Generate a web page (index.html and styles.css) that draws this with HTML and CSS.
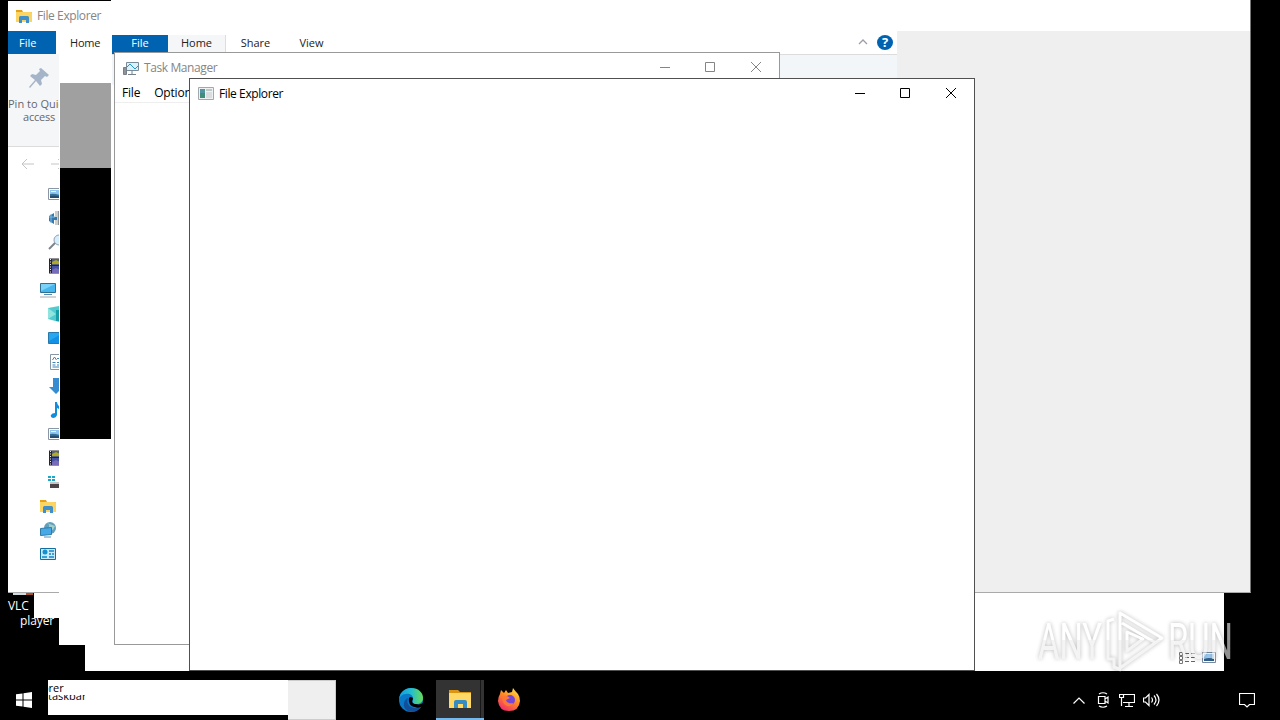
FILE: index.html
```html
<!DOCTYPE html>
<html lang="en">
<head>
    <meta charset="UTF-8">
    <meta name="viewport" content="width=device-width, initial-scale=1.0">
    <title>Desktop</title>
    <link rel="stylesheet" href="styles.css">
</head>
<body>
    <!-- Shared icons -->
    <svg class="icon-defs" aria-hidden="true">
        <symbol id="folder" viewBox="0 0 16 16">
            <path d="M0 2h6l1 2h9v4H0z" fill="#e6a117"/>
            <path d="M0 4h15q1 0 1 1v9H0z" fill="#fcd462"/>
            <path d="M3 15V9.500q0-1.500 1.500-1.500h7q1.500 0 1.500 1.500V15h-3v-3H6v3z" fill="#3f8fcb"/>
        </symbol>
        <symbol id="picture" viewBox="0 0 16 16">
            <path d="M.5 2.500h15v11H.5z" fill="#fff" stroke="#8a96a5"/>
            <path d="M2 4h12v8H2z" fill="#8fc6ef"/>
            <path d="M2 8q5-1 12 2v2H2z" fill="#376f94"/>
            <path d="M2 10q6-1 12 1v1H2z" fill="#264d70"/>
            <path d="M3 5h5v1H3z" fill="#e8f5ff"/>
        </symbol>
        <symbol id="film" viewBox="0 0 16 16">
            <path d="M1 .5h14v15H1z" fill="#272330"/>
            <path d="M4 1h8v6H4z" fill="#536172"/>
            <path d="M4 4l4-2 4 2v2H4z" fill="#b2a72d"/>
            <path d="M4 8h8v7H4z" fill="#4552a6"/>
            <path d="M4 12l4-2 4 2v3H4z" fill="#776db7"/>
            <path d="M2.500 1v14M13.500 1v14" stroke="#eee" stroke-dasharray="1 1.500"/>
        </symbol>
        <symbol id="minimize" viewBox="0 0 10 10"><path d="M0 5.500h10"/></symbol>
        <symbol id="maximize" viewBox="0 0 10 10"><path d="M.5.500h9v9h-9z"/></symbol>
        <symbol id="close" viewBox="0 0 10 10"><path d="M0 0l10 10M10 0L0 10"/></symbol>
    </svg>

    <div class="desktop">
        <div class="desktop-label">
            <svg width="20" height="3" viewBox="0 0 20 3"><path d="M0 0h13v2H0z" fill="#cfdde0"/><path d="M13 0h7v2h-7z" fill="#a8512c"/></svg>
            <span>VLC</span>
            <span class="label-second">player</span>
        </div>

        <!-- Trails left by a dragged window -->
        <div class="trail trail-one"></div>
        <div class="trail trail-two"></div>
        <div class="trail trail-three">
            <svg class="view-icons" width="38" height="14" viewBox="0 0 38 14" fill="none">
                <path d="M.5 1.500h3v3h-3zM.5 5.500h3v3h-3zM.5 9.500h3v3h-3z" stroke="#777"/>
                <path d="M6 2.500h4M12 2.500h4M6 6.500h4M12 6.500h4M6 10.500h4M12 10.500h4" stroke="#666"/>
                <path d="M23.500 1.500h13v10h-13z" fill="#fff" stroke="#78899f"/>
                <path d="M25 3h10v7H25z" fill="#9ecbf2"/>
                <path d="M25 8q5-2 10 0v2H25z" fill="#315f88"/>
            </svg>
        </div>

        <div class="window explorer-back">
            <div class="explorer-title">
                <svg width="16" height="16"><use href="#folder"/></svg>
                <span>File Explorer</span>
            </div>
            <div class="explorer-body">
                <div class="side">
                    <div class="file-tab">File</div>
                    <div class="pin">
                        <svg width="22" height="22" viewBox="0 0 22 22">
                            <path d="M13 1l8 7-2 2-2-1-4 4 1 4-2 2-4-5-6 7-1-1 6-7-5-4 2-2 4 1 4-4-1-2z" fill="#a5b4c9"/>
                        </svg>
                        <span class="pin-text">Pin to Quick</span>
                        <span>access</span>
                    </div>
                    <div class="nav-arrows">
                        <svg width="48" height="12" viewBox="0 0 48 12" fill="none" stroke="#c4c4c4">
                            <path d="M6 1L1 6l5 5M1 6h12M30 6h12M37 1l5 5-5 5"/>
                        </svg>
                    </div>
                    <div class="tree">
                        <div class="tree-row child"><svg><use href="#picture"/></svg></div>
                        <div class="tree-row child">
                            <svg viewBox="0 0 16 16"><path d="M7 1h9v14H7z" fill="#899398"/><path d="M7 1h3v14H7z" fill="#c9cecb"/><path d="M1 6l5-3v4h3v3H6v4L1 11z" fill="#3478ab"/><path d="M1 7h6M3 4v9" stroke="#80b6dc"/></svg>
                        </div>
                        <div class="tree-row child">
                            <svg viewBox="0 0 16 16"><circle cx="11" cy="6" r="5" fill="#d6edfc" stroke="#8ba4b6"/><path d="M7 9l-6 6" stroke="#7d858c" stroke-width="2"/></svg>
                        </div>
                        <div class="tree-row child"><svg><use href="#film"/></svg></div>
                        <div class="tree-row">
                            <svg viewBox="0 0 16 16"><path d="M.5 1.500h15v9H.5z" fill="#47b6ed" stroke="#317090"/><path d="M1 2h14L1 9z" fill="#7bd1f8"/><path d="M4 12.500h8" stroke="#538cad"/><path d="M0 15h16" stroke="#a8a9b0"/></svg>
                        </div>
                        <div class="tree-row child">
                            <svg viewBox="0 0 16 16"><path d="M0 2l11-2v16L0 13z" fill="#52cbd0"/><path d="M0 2l8 6-8 5z" fill="#91e4de"/><path d="M8 4h8v11H8z" fill="#159da8"/></svg>
                        </div>
                        <div class="tree-row child">
                            <svg viewBox="0 0 16 16"><path d="M.5 2.500h15v11H.5z" fill="#1491e5" stroke="#2878a9"/><path d="M1 3h14L1 11z" fill="#26a7ef"/></svg>
                        </div>
                        <div class="tree-row child">
                            <svg viewBox="0 0 16 16"><path d="M2.500.5h11v15h-11z" fill="#fff" stroke="#8796a4"/><path d="M4.500 6l2-3 2 3M9 4.500h3M4.500 8.500h3M9 8.500h3M4.500 11h3M9 11h3M4.500 13h7" fill="none" stroke="#3a84bd"/></svg>
                        </div>
                        <div class="tree-row child">
                            <svg viewBox="0 0 16 16"><path d="M5 0h6v8h5l-8 8-7-7h4z" fill="#378bd0"/></svg>
                        </div>
                        <div class="tree-row child">
                            <svg viewBox="0 0 16 16"><path d="M7 0h2q0 3 3 5 2 3 0 5 0-3-3-4v7q-1 3-4 3-3-1-2-3 1-2 4-2z" fill="#118bdb"/></svg>
                        </div>
                        <div class="tree-row child"><svg><use href="#picture"/></svg></div>
                        <div class="tree-row child"><svg><use href="#film"/></svg></div>
                        <div class="tree-row child">
                            <svg viewBox="0 0 16 16"><path d="M0 2h3v2H0zM4 2h3v2H4zM0 5h3v2H0zM4 5h3v2H4z" fill="#1ba7c9"/><path d="M2 8h14v3H2z" fill="#c5c6c8"/><path d="M2 10h14v4H2z" fill="#4c4448"/></svg>
                        </div>
                        <div class="tree-row"><svg><use href="#folder"/></svg></div>
                        <div class="tree-row">
                            <svg viewBox="0 0 16 16"><circle cx="10" cy="6" r="6" fill="#639fba"/><path d="M7 1q4 2 1 5l5 2 2-4" fill="#a2cfcc"/><path d="M.5 6.500l11-1v7l-11 1z" fill="#45aae7" stroke="#327ba5"/><path d="M4 15h7" stroke="#4e93bf"/></svg>
                        </div>
                        <div class="tree-row">
                            <svg viewBox="0 0 16 16"><path d="M.5 2.500h15v11H.5z" fill="#c6eafd" stroke="#156e9f"/><circle cx="5" cy="6" r="2.500" fill="#178fca"/><path d="M2 11h5" stroke="#38a3d3" stroke-width="2"/><path d="M9 5h5M9 8h2M12 8h2M9 11h5" stroke="#1c83bc" stroke-width="1.500"/></svg>
                        </div>
                    </div>
                </div>
            </div>
        </div>

        <!-- Leftover pieces of the ribbon and console windows -->
        <div class="strip">
            <div class="strip-home">Home</div>
            <div class="strip-gray"></div>
            <div class="strip-black"></div>
            <div class="strip-white"></div>
        </div>

        <div class="window ribbon-window">
            <div class="tabs">
                <span class="tab tab-file">File</span>
                <span class="tab tab-home">Home</span>
                <span class="tab">Share</span>
                <span class="tab">View</span>
                <div class="tab-help">
                    <svg width="10" height="6" viewBox="0 0 10 6" fill="none" stroke="#9d9da8" stroke-width="1.300"><path d="M1 5l4-4 4 4"/></svg>
                    <span class="help">?</span>
                </div>
            </div>
            <div class="ribbon"></div>
        </div>

        <div class="window task-manager">
            <div class="titlebar">
                <svg class="app-icon" width="16" height="16" viewBox="0 0 16 16" fill="none">
                    <path d="M3.500 2.500h12v8h-12z" fill="#d8f2fc" stroke="#788b97"/>
                    <path d="M4 7l3-3 5 5 3-3" stroke="#2a94c5"/>
                    <path d="M9 11v3M5 14.500h8" stroke="#778088"/>
                    <path d="M.5 7.500h3v7h-3z" fill="#8b949b" stroke="#778088"/>
                </svg>
                <span>Task Manager</span>
                <div class="controls">
                    <svg><use href="#minimize"/></svg>
                    <svg><use href="#maximize"/></svg>
                    <svg><use href="#close"/></svg>
                </div>
            </div>
            <div class="menu"><span>File</span><span>Options</span></div>
        </div>

        <div class="window explorer-front">
            <div class="titlebar">
                <svg class="app-icon" width="16" height="14" viewBox="0 0 16 14">
                    <path d="M.5.500h15v12H.5z" fill="#eff1f2" stroke="#a3a9aa"/>
                    <path d="M2 2h5v9H2z" fill="#438c7c"/>
                    <path d="M2 2h5v4H2z" fill="#5294a0"/>
                    <path d="M8 2h6v2H8z" fill="#c0c8c8"/>
                    <path d="M8 5h6v6H8z" fill="#dadddd"/>
                </svg>
                <span>File Explorer</span>
                <div class="controls">
                    <svg><use href="#minimize"/></svg>
                    <svg><use href="#maximize"/></svg>
                    <svg><use href="#close"/></svg>
                </div>
            </div>
        </div>

        <svg class="watermark" width="204" height="68" viewBox="0 0 204 68">
            <defs>
                <linearGradient id="mark" gradientUnits="userSpaceOnUse" x1="0" y1="0" x2="0" y2="68">
                    <stop offset=".5" stop-color="#fff"/>
                    <stop offset=".5" stop-color="#eee"/>
                </linearGradient>
            </defs>
            <g fill="url(#mark)" font-family="Roboto, sans-serif" font-size="50">
                <text x="4" y="53" textLength="64" lengthAdjust="spacingAndGlyphs">ANY</text>
                <text x="134" y="53" textLength="65" lengthAdjust="spacingAndGlyphs">RUN</text>
            </g>
            <g fill="none" stroke="url(#mark)" stroke-width="3" stroke-linejoin="round">
                <path d="M86 7l42 25-42 30zM88 17l34 20M80 13l-6 2v38h6v8l7 3"/>
                <path d="M93 26l16 7-16 12z"/>
            </g>
        </svg>

        <div class="taskbar">
            <div class="start">
                <svg width="16" height="16" viewBox="0 0 16 16" fill="#fff"><path d="M0 2.300l6.500-.9v6.100H0zM7.500 1.200L16 0v7.500H7.500zM0 8.500h6.500v6.100L0 13.700zM7.500 8.500H16V16l-8.500-1.200z"/></svg>
            </div>
            <div class="search-remains">
                <span class="remains-top">orer</span>
                <span class="remains-bottom">taskbar</span>
            </div>
            <div class="gray-button"></div>
            <div class="task edge">
                <svg width="24" height="24" viewBox="0 0 24 24">
                    <defs>
                        <linearGradient id="edgeTop" x1="0" x2="1"><stop stop-color="#159bdf"/><stop offset=".5" stop-color="#22bdd0"/><stop offset="1" stop-color="#6add52"/></linearGradient>
                    </defs>
                    <circle cx="12" cy="12" r="12" fill="#0878c7"/>
                    <path d="M0 11C1 4 6 0 12 0c8 0 12 5 12 10 0 4-3 6-7 6-3 0-4-2-3-4 1-4-3-7-7-6-3 0-6 2-7 5z" fill="url(#edgeTop)"/>
                    <path d="M9 10c-2 5 1 10 7 10 3 0 5-1 7-2-3 5-9 7-14 5C3 20 4 12 9 10z" fill="#124f99"/>
                    <path d="M10 10c1-2 4-1 4 1-2 3 0 5 3 5 3 1 5 0 7-1v3c-3 2-6 2-8 1-4 0-7-4-6-9z" fill="#000"/>
                </svg>
            </div>
            <div class="task active">
                <svg width="24" height="24" viewBox="0 0 24 24"><path d="M1 3h9l2 2h11v5H1z" fill="#dc9512"/><path d="M1 6h22v15H1z" fill="#ffd866"/><path d="M6 21v-6q0-2 2-2h9q2 0 2 2v6h-4v-4h-5v4z" fill="#348cc3"/></svg>
            </div>
            <div class="task firefox">
                <svg width="24" height="24" viewBox="0 0 24 24">
                    <defs>
                        <linearGradient id="fire" x1=".8" y1="0" x2=".2" y2="1"><stop stop-color="#ffe044"/><stop offset=".45" stop-color="#ff8a24"/><stop offset="1" stop-color="#f12670"/></linearGradient>
                    </defs>
                    <path d="M3 6l1-4 3 3 2-3 2 3 4-1 1-4q2 3 5 6 2 3 2 7-1 10-11 10T1 13q0-4 2-7z" fill="url(#fire)"/>
                    <circle cx="13" cy="12" r="5" fill="#7746d7"/>
                    <path d="M6 8q4-1 7 2l-4 2q1 4 7 3-1 4-6 3-6-3-4-10z" fill="#ff7831"/>
                </svg>
            </div>
            <div class="tray">
                <svg width="12" height="7" viewBox="0 0 12 7"><path d="M.5 6.500L6 1l5.500 5.500"/></svg>
                <svg width="12" height="16" viewBox="0 0 12 16"><path d="M1.500 4.500h6.500v7H1.500zM8 7l3-2v6L8 9M2 2q4-2.500 8 0M2 14q4 2.500 8 0"/></svg>
                <svg width="16" height="14" viewBox="0 0 16 14"><path d="M5 1.500h10.500v8H4M10 10v3M6 13.500h8M.5 1.500h4v3h-4zM2.500 5v8"/></svg>
                <svg width="17" height="14" viewBox="0 0 17 14"><path d="M.5 5h2L6 1.500v11L2.500 9h-2zM8.500 4.500q2 2.500 0 5M11 2.500q4 4.500 0 9M13.500 1q5 6 0 12"/></svg>
            </div>
            <svg class="notice" width="16" height="16" viewBox="0 0 16 16"><path d="M.5 1.500h15v11h-5L8 15l-2.500-2.500h-5z"/></svg>
        </div>
    </div>
</body>
</html>
```
FILE: styles.css
```css
* {
    box-sizing: border-box;
}

body {
    margin: 0;
    background-color: #000;
    font-family: "Open Sans", "Noto Sans", sans-serif;
    font-size: 11px;
    color: #222;
}

.icon-defs {
    display: none;
}

.desktop {
    position: relative;
    width: 1280px;
    height: 720px;
    overflow: hidden;
    background-color: #000;
}

svg {
    flex-shrink: 0;
}

.desktop-label {
    position: absolute;
    left: 8px;
    top: 593px;
    display: flex;
    flex-direction: column;
    color: #fff;
    font-size: 12px;
    line-height: 15px;
    letter-spacing: -0.1px;
}

.desktop-label svg {
    margin: 0 0 2px 5px;
}

.label-second {
    padding-left: 12px;
}

/* Window trails */
.trail {
    position: absolute;
    right: 56px;
    background-color: #fff;
}

.trail-one {
    left: 34px;
    top: 592px;
    height: 26px;
}

.trail-two {
    left: 59px;
    top: 592px;
    height: 53px;
}

.trail-three {
    left: 85px;
    top: 592px;
    height: 79px;
    display: flex;
    justify-content: flex-end;
    align-items: flex-end;
    padding: 0 7px 6px;
}

.window {
    position: absolute;
    background-color: #fff;
}

/* Rear explorer window */
.explorer-back {
    left: 8px;
    top: 0;
    width: 1243px;
    height: 593px;
    border-bottom: 1px solid #aaa;
    border-right: 1px solid #777;
}

.explorer-title {
    height: 31px;
    padding-left: 8px;
    display: flex;
    align-items: center;
    gap: 5px;
    background: linear-gradient(#000, #000) no-repeat 0 0 / 103px 1px;
    color: #858585;
    font-size: 12px;
    letter-spacing: -0.4px;
}

.explorer-body {
    height: 561px;
    background: linear-gradient(to right, #fff 889px, #efefef 889px);
}

.side {
    width: 51px;
    overflow: hidden;
}

.file-tab {
    width: 48px;
    height: 23px;
    padding-left: 11px;
    background-color: #0063b1;
    color: #fff;
    line-height: 24px;
}

.pin {
    height: 93px;
    padding: 13px 0 0;
    display: flex;
    flex-direction: column;
    background-color: #f5f6f7;
    border-bottom: 1px solid #dcdcdc;
    color: #66666c;
    line-height: 13px;
    white-space: nowrap;
}

.pin svg {
    margin: 0 0 8px 20px;
}

.pin span:last-child {
    padding-left: 15px;
    letter-spacing: -0.2px;
}

.nav-arrows {
    height: 35px;
    padding: 11px 0 0 13px;
}

.tree-row {
    height: 24px;
    padding-left: 32px;
    display: flex;
    align-items: center;
}

.tree-row svg {
    width: 16px;
    height: 16px;
}

.child {
    padding-left: 40px;
}

.strip {
    position: absolute;
    left: 59px;
    top: 31px;
    width: 55px;
    height: 614px;
    display: flex;
    flex-direction: column;
    background-color: #fff;
}

.strip-home {
    height: 52px;
    padding-left: 11px;
    line-height: 24px;
    letter-spacing: -0.2px;
}

.strip-gray {
    width: 51px;
    height: 85px;
    margin-left: 1px;
    background-color: #a0a0a0;
}

.strip-black {
    width: 51px;
    height: 271px;
    margin-left: 1px;
    background-color: #000;
}

.strip-white {
    flex: 1;
}

/* Ribbon window */
.ribbon-window {
    left: 112px;
    top: 35px;
    width: 785px;
    height: 50px;
}

.tabs {
    height: 20px;
    display: flex;
    border-bottom: 1px solid #dcdcdc;
    line-height: 16px;
}

.tab {
    width: 56px;
    text-align: center;
}

.tab-file {
    background-color: #0063b1;
    color: #fff;
}

.tab-home {
    width: 58px;
    background-color: #f5f6f7;
    border-right: 1px solid #ddd;
}

.tab:nth-child(3) {
    width: 59px;
}

.tab:nth-child(4) {
    width: 53px;
}

.tab-help {
    flex: 1;
    display: flex;
    justify-content: flex-end;
    align-items: flex-start;
    gap: 9px;
    padding-right: 4px;
}

.tab-help svg {
    margin-top: 4px;
}

.help {
    width: 16px;
    height: 15px;
    border-radius: 50%;
    background-color: #0063b1;
    color: #fff;
    font-size: 13px;
    font-weight: bold;
    line-height: 15px;
    text-align: center;
}

.ribbon {
    height: 30px;
    background-color: #f3f6f9;
}

/* Window title bars */
.titlebar {
    display: flex;
    align-items: center;
    height: 29px;
    padding-left: 8px;
    letter-spacing: -0.4px;
}

.controls {
    margin-left: auto;
    display: flex;
    gap: 36px;
    padding-right: 18px;
}

.controls svg {
    width: 10px;
    height: 10px;
    margin-bottom: 1px;
    fill: none;
    stroke: currentColor;
}

.controls svg:first-child {
    margin-right: -1px;
}

.app-icon {
    margin-right: 5px;
}

.task-manager {
    left: 114px;
    top: 52px;
    width: 666px;
    height: 593px;
    border: 1px solid #999;
    color: #858585;
    font-size: 12px;
}

.menu {
    height: 21px;
    padding-left: 7px;
    display: flex;
    gap: 14px;
    border-bottom: 1px solid #eee;
    color: #000;
    line-height: 22px;
    letter-spacing: -0.2px;
}

.explorer-front {
    left: 189px;
    top: 78px;
    width: 786px;
    height: 593px;
    border: 1px solid #505050;
    color: #000;
    font-size: 12px;
}

.watermark {
    position: absolute;
    left: 1034px;
    top: 606px;
    opacity: 0.6;
    filter: drop-shadow(0 0 2px rgba(0, 0, 0, 0.45));
}

/* Taskbar */
.taskbar {
    position: absolute;
    left: 0;
    bottom: 0;
    width: 1280px;
    height: 40px;
    display: flex;
    background-color: #000;
}

.start {
    width: 48px;
    display: flex;
    align-items: center;
    justify-content: center;
}

.search-remains {
    width: 240px;
    height: 35px;
    display: flex;
    flex-direction: column;
    background-color: #fff;
    color: #000;
    overflow: hidden;
}

.remains-top {
    height: 15px;
    margin-left: -6px;
    line-height: 16px;
}

/* only the lower half of this line is left */
.remains-bottom {
    height: 6px;
    overflow: hidden;
    line-height: 2px;
}

.gray-button {
    width: 48px;
    background-color: #efefef;
    border: 1px solid #ccc;
    border-left: 0;
}

.task {
    width: 48px;
    display: flex;
    align-items: center;
    justify-content: center;
}

.edge {
    margin-left: 51px;
}

.active {
    margin-left: 1px;
    background: linear-gradient(to right, #333 44px, #171717 44px, #171717 45px, #333 45px);
    border-bottom: 2px solid #76b9ed;
}

.firefox {
    margin-left: 1px;
}

.tray {
    margin-left: auto;
    display: flex;
    align-items: center;
    gap: 8px;
}

.tray svg,
.notice {
    fill: none;
    stroke: #fff;
    stroke-width: 1.2;
}

.tray svg:first-child {
    margin-right: 4px;
}

.tray svg:nth-child(2) {
    margin-right: 2px;
}

.notice {
    align-self: center;
    margin: 0 25px 0 79px;
}
```
